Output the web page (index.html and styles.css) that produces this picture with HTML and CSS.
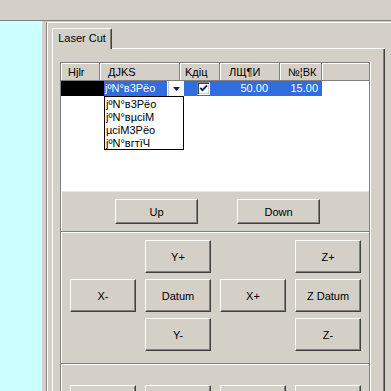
FILE: index.html
```html
<!DOCTYPE html>
<html>
<head>
<meta charset="utf-8">
<link rel="stylesheet" href="styles.css">
</head>
<body>
<div class="app">
  <div class="toolbar"></div>
  <div class="main">
    <div class="side"></div>
    <div class="splitter"></div>
    <div class="pane">
      <div class="tabs">
        <div class="tab">Laser Cut</div>
        <div class="tab-fill"></div>
      </div>
      <div class="panel">
        <div class="groups">
          <section class="sec sec-list">
            <div class="list">
              <div class="hdr">
                <div class="hc c1">Hjlr</div>
                <div class="hc c2">ДJKS</div>
                <div class="hc c3">Kдiц</div>
                <div class="hc c4">ЛЩ¶И</div>
                <div class="hc c5">№¦ВК</div>
                <div class="hc cfill"></div>
              </div>
              <div class="row">
                <div class="cell-black"></div>
                <div class="combo">
                  <div class="combo-text">jºN°в3Рёо</div>
                  <div class="combo-btn"><svg width="7" height="4" viewBox="0 0 7 4"><path d="M0 0H7L3.5 4Z" fill="#0a1e6e"/></svg></div>
                </div>
                <div class="gap1"></div>
                <div class="sel">
                  <div class="sc s3"><span class="chk"><svg width="9" height="9" viewBox="0 0 9 9"><path d="M1.2 3.8L3.5 6.2L8 1.4" fill="none" stroke="#0a1e6e" stroke-width="1.8"/></svg></span></div>
                  <div class="sc s4">50.00</div>
                  <div class="sc s5">15.00</div>
                </div>
              </div>
              <ul class="dropdown">
                <li>jºN°в3Рёо</li>
                <li>jºN°вµсіМ</li>
                <li>µсіМ3Рёо</li>
                <li>jºN°вгтїЧ</li>
              </ul>
            </div>
            <div class="updown">
              <button class="btn btn-ud">Up</button>
              <button class="btn btn-ud">Down</button>
            </div>
          </section>
          <section class="sec sec-jog">
            <button class="btn r1 k2">Y+</button>
            <button class="btn r1 k4">Z+</button>
            <button class="btn r2 k1">X-</button>
            <button class="btn r2 k2">Datum</button>
            <button class="btn r2 k3">X+</button>
            <button class="btn r2 k4">Z Datum</button>
            <button class="btn r3 k2">Y-</button>
            <button class="btn r3 k4">Z-</button>
          </section>
          <section class="sec sec-more">
            <button class="btn"></button>
            <button class="btn"></button>
            <button class="btn"></button>
            <button class="btn"></button>
          </section>
        </div>
      </div>
    </div>
  </div>
</div>
</body>
</html>
```
FILE: styles.css
```css
* { box-sizing: border-box; }
html, body { margin: 0; padding: 0; }
body {
  background: #d4d0c8;
  font: 11px "Liberation Sans", Arial, sans-serif;
  color: #000;
}
.app {
  width: 391px;
  height: 391px;
  overflow: hidden;
  display: flex;
  flex-direction: column;
}
.toolbar {
  height: 21px;
  flex: none;
  border-bottom: 1px solid #808080;
}
.main {
  flex: 1;
  display: flex;
  min-height: 0;
}
.side {
  width: 41px;
  flex: none;
  background: #ccffff;
}
.splitter {
  width: 5px;
  flex: none;
  border-left: 1px solid #fff;
}
.pane {
  flex: 1;
  min-width: 0;
  margin-top: 1px;
  border-left: 1px solid #808080;
  box-shadow: inset 1px 1px #fff;
  padding: 6px 6px 0 5px;
  display: flex;
  flex-direction: column;
}
.tabs {
  display: flex;
  height: 21px;
  flex: none;
}
.tab {
  width: 60px;
  height: 21px;
  border-top: 1px solid #fff;
  border-left: 1px solid #fff;
  border-right: 1px solid #404040;
  border-radius: 2px 2px 0 0;
  box-shadow: inset -1px 0 #808080;
  text-align: center;
  line-height: 18px;
}
.tab-fill {
  flex: 1;
  border-bottom: 1px solid #fff;
}
.panel {
  flex: 1;
  border-left: 1px solid #fff;
  border-right: 1px solid #404040;
  box-shadow: inset -1px 0 #808080;
  padding: 13px 0 0 7px;
}
.groups {
  width: 310px;
  border: 1px solid #808080;
  border-bottom: none;
  box-shadow: inset 1px 1px #fff, 1px 0 #fff;
}
.sec-list {
  border-bottom: 1px solid #808080;
}
.list {
  position: relative;
  height: 129px;
  background: #fff;
  border-bottom: 1px solid #ebe9e4;
}
.hdr {
  display: flex;
  height: 18px;
}
.hc {
  height: 18px;
  background: #d4d0c8;
  border-right: 1px solid #808080;
  border-bottom: 1px solid #808080;
  box-shadow: inset 1px 1px #fff;
  line-height: 18px;
  white-space: nowrap;
  overflow: hidden;
}
.c1 { width: 39px; padding-left: 7px; }
.c2 { width: 80px; padding-left: 8px; }
.c3 { width: 40px; padding-left: 5px; }
.c4 { width: 60px; padding-left: 9px; }
.c5 { width: 42px; padding-left: 8px; }
.cfill { flex: 1; border-right: none; }
.row {
  display: flex;
  height: 15px;
}
.cell-black {
  width: 43px;
  background: #000;
}
.combo {
  width: 79px;
  display: flex;
  background: #fff;
}
.combo-text {
  flex: 1;
  background: #316ce0;
  color: #fff;
  line-height: 14px;
  padding-left: 1px;
  white-space: nowrap;
}
.combo-btn {
  width: 15px;
  margin-left: 1px;
  background: #fff;
  border-left: 1px solid #c8c8c8;
  display: flex;
  align-items: center;
  justify-content: center;
}
.gap1 {
  width: 1px;
  background: #fff;
}
.sel {
  display: flex;
  background: #316ce0;
  color: #fff;
}
.sc {
  height: 15px;
  line-height: 15px;
  white-space: nowrap;
}
.s3 { width: 36px; padding-left: 13px; padding-top: 1px; }
.s4 { width: 60px; text-align: right; padding-right: 12px; }
.s5 { width: 42px; text-align: right; padding-right: 4px; }
.chk {
  display: flex;
  align-items: center;
  justify-content: center;
  width: 13px;
  height: 13px;
  background: #fff;
  border: 1px solid;
  border-color: #808080 #fff #fff #808080;
  box-shadow: inset 1px 1px #404040, inset -1px -1px #d4d0c8;
}
.dropdown {
  position: absolute;
  left: 43px;
  top: 33px;
  width: 80px;
  height: 54px;
  margin: 0;
  padding: 1px 0 0 0;
  list-style: none;
  background: #fff;
  border: 1px solid #000;
}
.dropdown li {
  height: 13px;
  line-height: 13px;
  padding-left: 1px;
  white-space: nowrap;
}
.updown {
  display: flex;
  height: 39px;
  padding: 7px 0 0 54px;
  gap: 39px;
}
.btn {
  background: #d4d0c8;
  border: 1px solid;
  border-color: #fff #404040 #404040 #fff;
  box-shadow: inset -1px -1px #808080;
  font: inherit;
  color: #000;
  padding: 0;
  margin: 0;
}
.btn-ud {
  width: 83px;
  height: 25px;
}
.sec-jog {
  border-top: 1px solid #fff;
  border-bottom: 1px solid #808080;
  padding: 7px 0 12px 9px;
  display: grid;
  grid-template-columns: repeat(4, 66px);
  grid-template-rows: repeat(3, 33px);
  gap: 6px 9px;
}
.sec-jog .btn { width: 66px; height: 33px; }
.r1 { grid-row: 1; }
.r2 { grid-row: 2; }
.r3 { grid-row: 3; }
.k1 { grid-column: 1; }
.k2 { grid-column: 2; }
.k3 { grid-column: 3; }
.k4 { grid-column: 4; }
.sec-more {
  border-top: 1px solid #fff;
  padding: 20px 0 0 9px;
  display: flex;
  gap: 9px;
}
.sec-more .btn { width: 66px; height: 33px; flex: none; }
```
